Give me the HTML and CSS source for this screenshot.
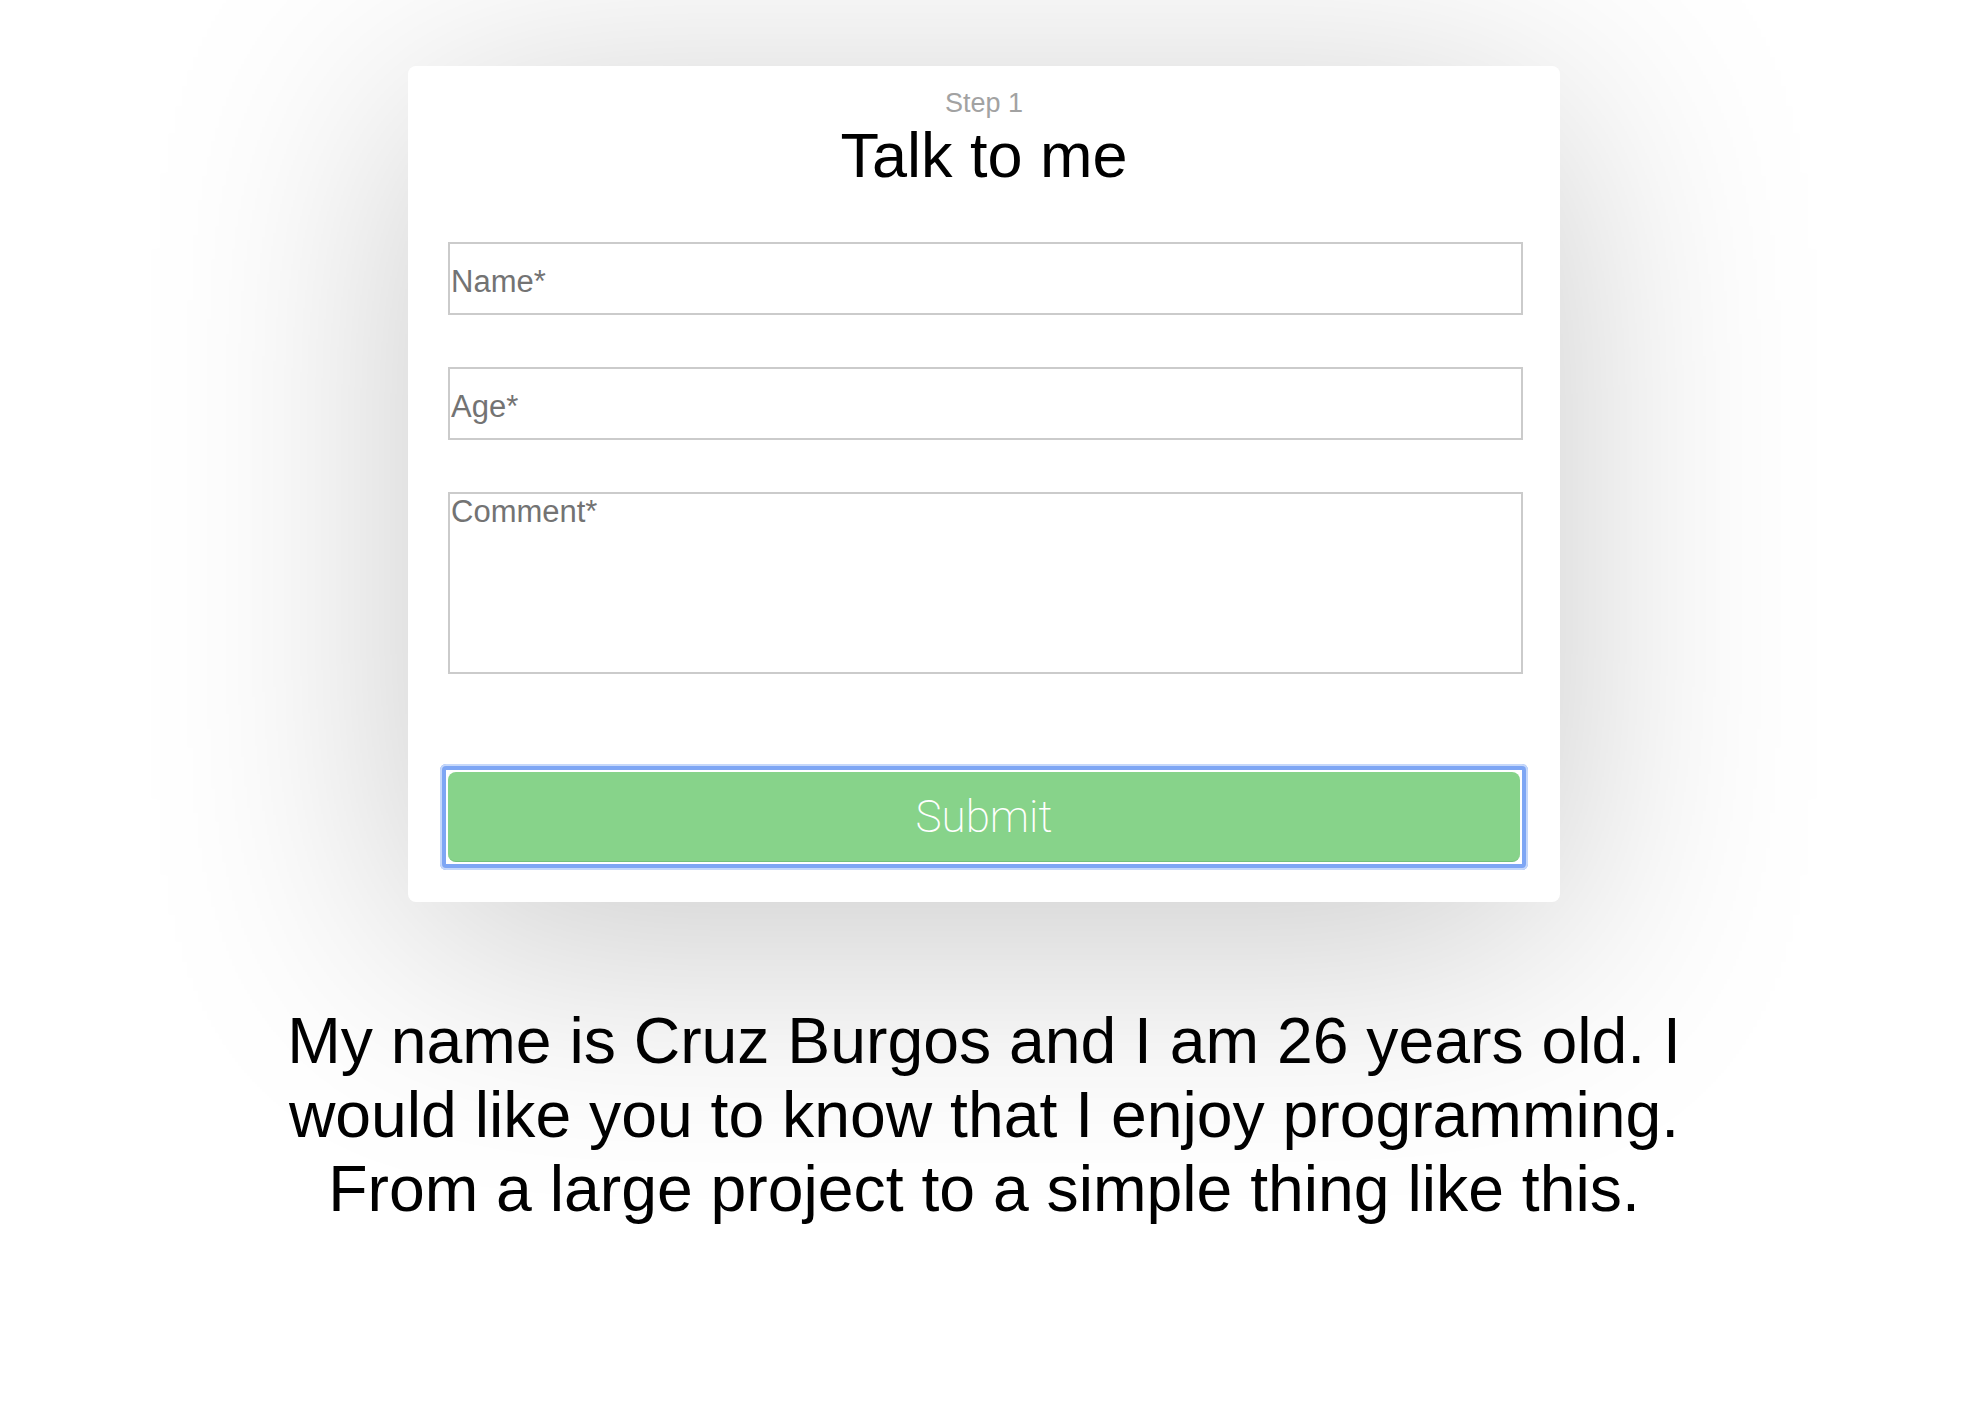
FILE: index.html
```html
<!DOCTYPE html>
<html lang="en">
<head>
<meta charset="utf-8">
<title>Talk to me</title>
<link rel="stylesheet" href="styles.css">
</head>
<body>
<main class="page">
  <section class="card">
    <p class="step">Step 1</p>
    <h1 class="title">Talk to me</h1>
    <form class="form">
      <input class="field" type="text" placeholder="Name*">
      <input class="field" type="text" placeholder="Age*">
      <textarea class="field field-area" placeholder="Comment*"></textarea>
      <div class="submit-ring">
        <button class="submit" type="button">Submit</button>
      </div>
    </form>
  </section>
  <p class="bio">My name is Cruz Burgos and I am 26 years old. I<br>would like you to know that I enjoy programming.<br>From a large project to a simple thing like this.</p>
</main>
</body>
</html>
```

FILE: styles.css
```css
* { box-sizing: border-box; }

html, body {
  margin: 0;
  padding: 0;
  background: #ffffff;
}

body {
  font-family: "Liberation Sans", Arial, Helvetica, sans-serif;
  color: #000;
  width: 1968px;
  height: 1420px;
  overflow: hidden;
}

.page {
  display: flex;
  flex-direction: column;
  align-items: center;
  padding-top: 66px;
}

.card {
  width: 1152px;
  background: #fff;
  border-radius: 8px;
  padding: 21px 40px 32px 40px;
  box-shadow: 0 40px 300px rgba(0, 0, 0, 0.22);
  display: flex;
  flex-direction: column;
}

.step {
  margin: 0;
  text-align: center;
  font-size: 27px;
  line-height: 32px;
  color: #a2a2a2;
}

.title {
  margin: 1px 0 0 0;
  text-align: center;
  font-size: 63px;
  line-height: 70px;
  font-weight: 400;
  color: #000;
}

.form {
  margin-top: 52px;
  display: flex;
  flex-direction: column;
  gap: 52px;
}

.field {
  display: block;
  width: 1075px;
  height: 73px;
  margin: 0;
  padding: 6px 0 0 1px;
  border: 2px solid #cbcbcb;
  border-radius: 0;
  background: #fff;
  font-family: "Liberation Sans", Arial, Helvetica, sans-serif;
  font-size: 31px;
  color: #222;
  outline: none;
}

.field::placeholder {
  color: #737373;
  opacity: 1;
}

.field-area {
  height: 182px;
  padding-top: 0;
  resize: none;
  line-height: 36px;
}

.submit-ring {
  margin-top: 38px;
  margin-left: -8px;
  width: 1088px;
  padding: 8px;
  border-radius: 6px;
  background: #fff;
  box-shadow: inset 0 0 0 2px #c6d8fa, inset 0 0 0 6px #7ea6f4;
}

.submit {
  display: block;
  width: 1072px;
  height: 90px;
  border: none;
  border-bottom: 1px solid #74c07a;
  border-radius: 8px;
  background: #87d38a;
  color: #fff;
  font-family: Roboto, "Liberation Sans", sans-serif;
  font-weight: 200;
  font-size: 44px;
  padding: 0;
  cursor: pointer;
}

.bio {
  margin: 102px 0 0 0;
  text-align: center;
  font-size: 64.3px;
  line-height: 74px;
  color: #000;
}
```
